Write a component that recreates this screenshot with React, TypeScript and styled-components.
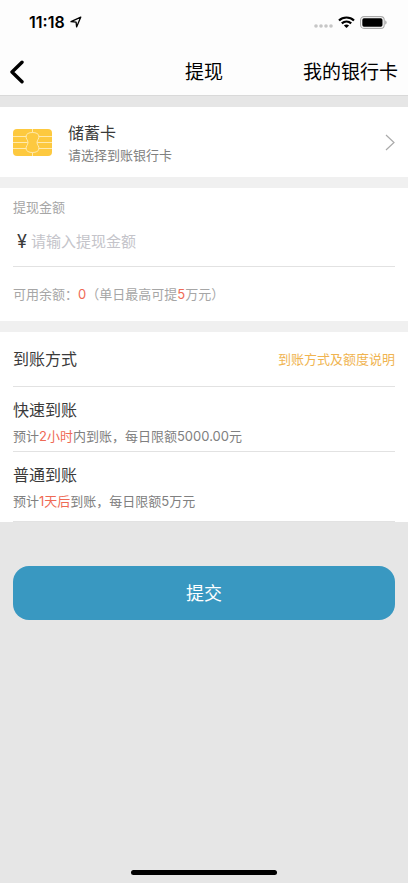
import React from "react";
import styled, { createGlobalStyle } from "styled-components";

const GlobalStyle = createGlobalStyle`
  * { box-sizing: border-box; }
  body {
    margin: 0;
    background: #e6e6e6;
    color: #3a3a3a;
    font-family: Inter, "Noto Sans CJK SC", sans-serif;
    font-size: 13px;
    line-height: 20px;
  }
  button, input { font-family: inherit; }
  h1, h2, h3, p { margin: 0; font-weight: 400; }
`;

const Screen = styled.div`
  display: flex;
  flex-direction: column;
  min-height: 100vh;
`;

const Header = styled.header`
  background: #fdfdfd;
  border-bottom: 1px solid #d9d9d9;
`;

const StatusBar = styled.div`
  display: flex;
  align-items: center;
  justify-content: space-between;
  height: 44px;
  padding: 0 21px 0 29px;
  color: #000;
`;

const StatusGroup = styled.div`
  display: flex;
  align-items: center;
  gap: 5px;
`;

const Clock = styled.time`
  font-size: 16px;
  font-weight: 600;
`;

const NavBar = styled.nav`
  display: grid;
  grid-template-columns: 1fr auto 1fr;
  align-items: center;
  height: 51px;
  padding: 5px 10px 0;
  color: #000;
`;

const BackButton = styled.button`
  display: flex;
  justify-self: start;
  padding: 0;
  border: 0;
  background: none;
  color: inherit;
`;

const NavTitle = styled.h1`
  padding-top: 2px;
  font-size: 19px;
  line-height: 28px;
`;

const NavLink = styled.a`
  justify-self: end;
  padding-top: 2px;
  color: inherit;
  font-size: 19px;
  line-height: 28px;
  text-decoration: none;
  white-space: nowrap;
`;

const Content = styled.main`
  display: flex;
  flex-direction: column;
  gap: 11px;
  margin-top: 11px;
  background: #f0f0f0;
`;

const CardPicker = styled.button`
  display: flex;
  align-items: center;
  gap: 16px;
  padding: 13px;
  border: 0;
  background: #fff;
  color: inherit;
  text-align: left;
`;

const CardText = styled.span`
  display: flex;
  flex: 1;
  flex-direction: column;
`;

const CardName = styled.span`
  font-size: 16px;
  line-height: 26px;
`;

const CardHint = styled.span`
  color: #808080;
  font-size: 13px;
  line-height: 18px;
`;

const Panel = styled.section`
  padding: 0 13px;
  background: #fff;
`;

const AmountLabel = styled.label`
  display: block;
  padding-top: 9px;
  color: #a6a6a6;
`;

const AmountRow = styled.div`
  display: flex;
  align-items: center;
  height: 50px;
  padding-left: 4px;
  border-bottom: 1px solid #e2e2e2;
`;

const Currency = styled.span`
  width: 14px;
  font-size: 18px;
`;

const AmountInput = styled.input`
  flex: 1;
  min-width: 0;
  padding: 0;
  border: 0;
  outline: 0;
  background: none;
  color: #333;
  font-size: 15px;
  line-height: 24px;
  &::placeholder { color: #c4c4ca; opacity: 1; }
`;

const Balance = styled.p`
  padding: 17px 0;
  color: #a6a6a6;
`;

const Accent = styled.span`
  color: #ef6a55;
`;

const MethodHeader = styled.div`
  display: flex;
  align-items: center;
  justify-content: space-between;
  height: 55px;
  border-bottom: 1px solid #e2e2e2;
`;

const MethodTitle = styled.h2`
  font-size: 16px;
  line-height: 24px;
`;

const HelpLink = styled.a`
  color: #f0b450;
  text-decoration: none;
`;

const Method = styled.article`
  padding: 11px 0 5px;
  border-bottom: 1px solid #e2e2e2;
  &:last-child { padding-bottom: 10px; }
`;

const MethodName = styled.h3`
  font-size: 16px;
  line-height: 24px;
`;

const MethodNote = styled.p`
  padding-top: 4px;
  color: #808080;
`;

const SubmitButton = styled.button`
  height: 54px;
  margin: 44px 13px 0;
  padding: 2px 0 0;
  border: 0;
  border-radius: 16px;
  background: #3998c1;
  color: #fff;
  font-size: 18px;
  line-height: 28px;
`;

const HomeIndicator = styled.div`
  width: 146px;
  height: 5px;
  margin: auto auto 8px;
  border-radius: 3px;
  background: #000;
`;

const LocationIcon = () => (
  <svg width="12" height="12" viewBox="0 0 12 12" aria-hidden="true">
    <path d="M1 5.7 10.8 1.1 6.6 10.9 6.1 6.1Z" fill="none" stroke="currentColor" strokeWidth="1.3" strokeLinejoin="round" />
  </svg>
);

const SignalIcon = () => (
  <svg width="20" height="12" viewBox="0 0 20 12" fill="#c6c6c6" aria-hidden="true">
    <circle cx="3" cy="10" r="1.8" />
    <circle cx="8" cy="10" r="1.8" />
    <circle cx="13" cy="10" r="1.8" />
    <circle cx="18" cy="10" r="1.8" />
  </svg>
);

const WifiIcon = () => (
  <svg width="17" height="12" viewBox="0 0 17 12" aria-hidden="true">
    <g fill="none" stroke="currentColor" strokeWidth="2.2">
      <path d="M1 4.5C5.1.5 11.9.5 16 4.5" />
      <path d="M3.8 7.4c2.7-2.5 6.7-2.5 9.4 0" />
    </g>
    <path d="M8.5 12 5.9 9.4c1.5-1.3 3.7-1.3 5.2 0Z" fill="currentColor" />
  </svg>
);

const BatteryIcon = () => (
  <svg width="27" height="13" viewBox="0 0 27 13" aria-hidden="true">
    <rect x=".6" y=".6" width="23.6" height="11.8" rx="3.4" fill="#fff" stroke="#aaa" strokeWidth="1.1" />
    <rect x="2.3" y="2.3" width="20.2" height="8.4" rx="1.6" />
    <path d="M25.3 4.3c1.7.7 1.7 3.7 0 4.4Z" fill="#999" />
  </svg>
);

const BackIcon = () => (
  <svg width="14" height="24" viewBox="0 0 14 24" aria-hidden="true">
    <path d="M12 2.2 2 12l10 9.8" fill="none" stroke="currentColor" strokeWidth="3.4" strokeLinecap="round" strokeLinejoin="round" />
  </svg>
);

const ChipIcon = () => (
  <svg width="39" height="27" viewBox="0 0 39 27" aria-hidden="true">
    <rect width="39" height="27" rx="4" fill="#fdc93f" />
    <g fill="none" stroke="#ffeaae" strokeWidth="1">
      <path d="M19.5 0v3.5M19.5 23.5V27M0 7.5h13.5M25.5 7.5H39M0 13.5h14.8M24.2 13.5H39M0 19.5h13.5M25.5 19.5H39" />
      <path d="M19.5 3.5c-3.4 0-6.2 1.2-6.5 3.7-.3 2.5 2 3.8 2 6.3s-2.3 3.8-2 6.3c.3 2.5 3.1 3.7 6.5 3.7s6.2-1.2 6.5-3.7c.3-2.5-2-3.8-2-6.3s2.3-3.8 2-6.3c-.3-2.5-3.1-3.7-6.5-3.7Z" />
    </g>
  </svg>
);

const ForwardIcon = () => (
  <svg width="10" height="17" viewBox="0 0 10 17" aria-hidden="true">
    <path d="m1 1 8 7.5L1 16" fill="none" stroke="#aaa" strokeWidth="1.2" />
  </svg>
);

const methods = [
  { name: "快速到账", time: "2小时", rest: "内到账，每日限额5000.00元" },
  { name: "普通到账", time: "1天后", rest: "到账，每日限额5万元" },
];

export default function App() {
  return (
    <>
      <GlobalStyle />
      <Screen lang="zh-CN">
        <Header>
          <StatusBar>
            <StatusGroup>
              <Clock>11:18</Clock>
              <LocationIcon />
            </StatusGroup>
            <StatusGroup>
              <SignalIcon />
              <WifiIcon />
              <BatteryIcon />
            </StatusGroup>
          </StatusBar>
          <NavBar>
            <BackButton type="button" aria-label="返回">
              <BackIcon />
            </BackButton>
            <NavTitle>提现</NavTitle>
            <NavLink href="#cards">我的银行卡</NavLink>
          </NavBar>
        </Header>
        <Content>
          <CardPicker type="button">
            <ChipIcon />
            <CardText>
              <CardName>储蓄卡</CardName>
              <CardHint>请选择到账银行卡</CardHint>
            </CardText>
            <ForwardIcon />
          </CardPicker>
          <Panel>
            <AmountLabel htmlFor="amount">提现金额</AmountLabel>
            <AmountRow>
              <Currency>¥</Currency>
              <AmountInput id="amount" inputMode="decimal" placeholder="请输入提现金额" />
            </AmountRow>
            <Balance>
              可用余额：<Accent>0</Accent>（单日最高可提<Accent>5</Accent>万元）
            </Balance>
          </Panel>
          <Panel>
            <MethodHeader>
              <MethodTitle>到账方式</MethodTitle>
              <HelpLink href="#limits">到账方式及额度说明</HelpLink>
            </MethodHeader>
            {methods.map((method) => (
              <Method key={method.name}>
                <MethodName>{method.name}</MethodName>
                <MethodNote>
                  预计<Accent>{method.time}</Accent>{method.rest}
                </MethodNote>
              </Method>
            ))}
          </Panel>
        </Content>
        <SubmitButton type="button">提交</SubmitButton>
        <HomeIndicator />
      </Screen>
    </>
  );
}
